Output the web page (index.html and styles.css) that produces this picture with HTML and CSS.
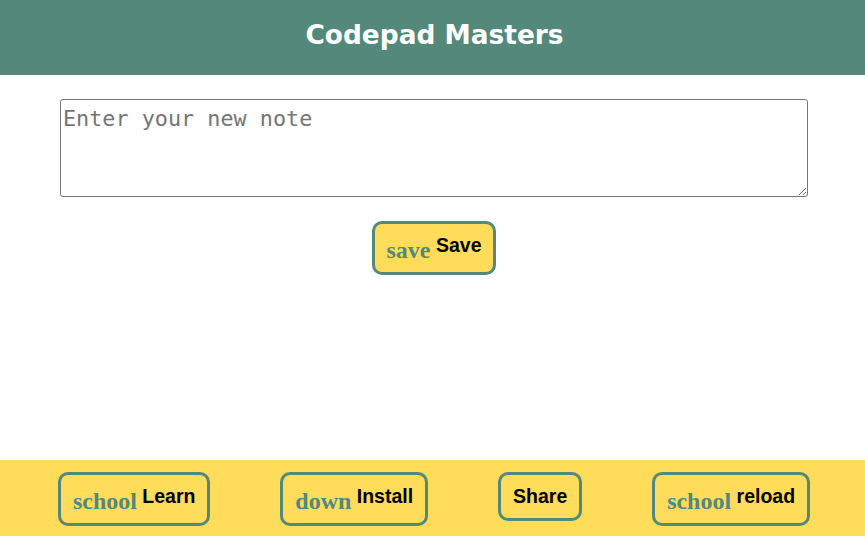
FILE: index.html
```html
<!DOCTYPE html>
<html lang="en">
<head>
<meta charset="utf-8">
<title>Codepad Masters</title>
<link rel="stylesheet" href="styles.css">
</head>
<body>
<header class="topbar">
  <h1 class="title">Codepad Masters</h1>
</header>
<main class="content">
  <textarea class="note-input" placeholder="Enter your new note"></textarea>
  <div class="actions">
    <button class="btn"><span class="icon">save</span> Save</button>
  </div>
</main>
<footer class="bottombar">
  <button class="btn"><span class="icon">school</span> Learn</button>
  <button class="btn"><span class="icon">down</span> Install</button>
  <button class="btn">Share</button>
  <button class="btn"><span class="icon">school</span> reload</button>
</footer>
</body>
</html>
```
FILE: styles.css
```css
html, body {
  margin: 0;
  padding: 0;
}
body {
  min-height: 100vh;
  display: flex;
  flex-direction: column;
  background: #ffffff;
  font-family: "Liberation Sans", Arial, sans-serif;
}
.topbar {
  background: #53887b;
  height: 75px;
  box-sizing: border-box;
  padding: 0 0 4px 4px;
  display: flex;
  align-items: center;
  justify-content: center;
}
.title {
  margin: 0;
  color: #ffffff;
  font-family: "DejaVu Sans", Verdana, sans-serif;
  font-weight: bold;
  font-size: 26.4px;
  line-height: 1;
}
.content {
  display: flex;
  flex-direction: column;
  align-items: stretch;
  padding: 24px 57px 0 60px;
}
.note-input {
  box-sizing: border-box;
  height: 98px;
  width: 100%;
  margin: 0;
  border: 1px solid #767676;
  border-radius: 3px;
  padding: 6px 2px;
  font-family: "DejaVu Sans Mono", "Liberation Mono", monospace;
  font-size: 21.8px;
  color: #222;
  resize: vertical;
}
.note-input::placeholder {
  color: #757575;
}
.actions {
  display: flex;
  justify-content: center;
  padding-top: 24px;
}
.btn {
  background: #ffdc5a;
  border: 3px solid #53887b;
  border-radius: 10px;
  padding: 10px 12px 10px 12px;
  font-family: "Liberation Sans", Arial, sans-serif;
  font-weight: bold;
  font-size: 19.5px;
  color: #000;
  cursor: pointer;
}
.icon {
  font-family: "Liberation Serif", "Times New Roman", serif;
  font-weight: bold;
  font-size: 24px;
  line-height: 24px;
  color: #53887b;
  vertical-align: -6px;
}
.bottombar {
  margin-top: auto;
  background: #ffdc5a;
  height: 76px;
  box-sizing: border-box;
  padding: 12px 0 0 3px;
  display: flex;
  justify-content: space-evenly;
  align-items: flex-start;
}
.bottombar .btn {
  margin: 0 15px;
}
```
